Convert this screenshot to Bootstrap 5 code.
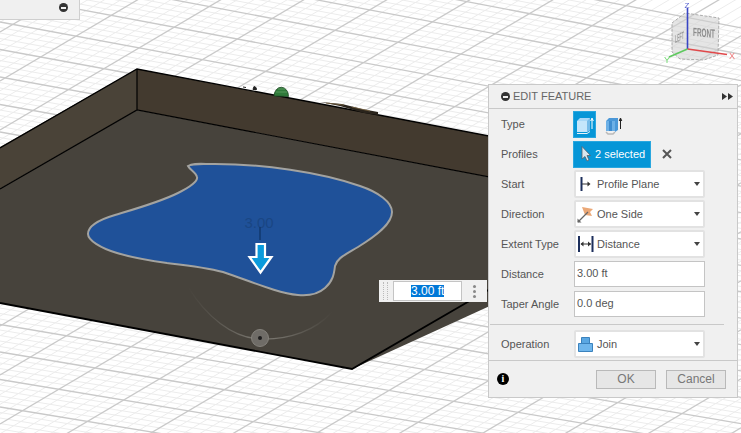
<!DOCTYPE html>
<html lang="en">
<head>
  <meta charset="UTF-8">
  <title>Edit Feature</title>
  <link href="https://cdn.jsdelivr.net/npm/bootstrap@5.3.0/dist/css/bootstrap.min.css" rel="stylesheet">
  <style>
    html, body { margin: 0; height: 100%; overflow: hidden; background: #fff; }
    body { font-family: "Liberation Sans", Arial, sans-serif; font-size: 11px; color: #555; }
    .stage { width: 741px; height: 433px; }
    .scene { left: 0; top: 0; }
    .cube-soft { filter: blur(.35px); }
    .browser-stub { left: 0; top: 0; width: 80px; height: 20px; background: #f0f0f0; border: 1px solid #cfcfcf; border-width: 0 1px 1px 0; padding: 0 11px 4px 0; }
    .minus-dot { width: 9px; height: 9px; border-radius: 50%; background: #333; }
    .minus-dot::after { content: ""; width: 5px; height: 2px; background: #f0f0f0; }
    .float-input { left: 379px; top: 280px; width: 108px; height: 22px; background: #f0f0f0; }
    .grip { width: 5px; height: 18px; margin: 0 5px 0 4px; border-left: 1px dotted #bbb; border-right: 1px dotted #bbb; }
    .float-field { width: 69px; height: 20px; background: #fff; border: 1px solid #c4c4c4; padding-left: 17px; font-size: 12px; line-height: 18px; color: #fff; }
    .float-field span { background: #0078d7; display: inline-block; height: 12px; line-height: 12px; padding: 0; }
    .kebab { width: 3px; height: 3px; margin-left: 11px; border-radius: 50%; background: #888; box-shadow: 0 -5px 0 #888, 0 5px 0 #888; }
    .feature-panel { left: 488px; top: 84px; width: 250px; height: 314px; background: #f0f0f0; border: 1px solid #c9c9c9; }
    .panel-head { height: 24px; padding: 0 4px 0 12px; border-bottom: 1px solid #c9c9c9; color: #666; }
    .panel-head .minus-dot { margin-right: 3px; }
    .panel-body-area { height: 251px; }
    .form-line { height: 30px; padding-left: 12px; }
    .form-line label { width: 73px; margin: 0; color: #555; flex: none; }
    .tool-btn { height: 27px; margin-left: -1px; background: #0696d7; border: 1px solid #2aa7df; border-radius: 0; color: #fff; font-size: 11px; padding: 0; }
    .type-btn { width: 23px; }
    .ghost-btn { width: 22px; margin-left: 7px; }
    .pick-btn { width: 78px; padding-left: 7px; gap: 4px; }
    .clear-x { margin-left: 11px; }
    .combo { width: 131px; height: 28px; background: #fff; border: 2px solid #e2e2e2; border-radius: 2px; padding: 0 3px 0 1px; color: #555; flex: none; }
    .combo-icon { width: 20px; height: 20px; flex: none; }
    .combo-caret { margin-left: auto; width: 0; height: 0; border: 3.5px solid transparent; border-top: 4px solid #444; border-bottom: 0; }
    .feature-panel .field-input { width: 131px; height: 26px; border: 1px solid #c4c4c4; border-radius: 0; padding: 0 2px 2px 2px; font-size: 11px; color: #555; background: #fff; box-shadow: none; flex: none; }
    .panel-rule { margin: 5px 13px 4px 1px; height: 1px; background: #c9c9c9; }
    .panel-foot { height: 37px; border-top: 1px solid #c9c9c9; padding: 0 11px 0 8px; }
    .info-dot { width: 12px; height: 12px; border-radius: 50%; background: #000; color: #fff; font: bold 10px/12px "Liberation Serif", serif; text-align: center; }
    .foot-btn { width: 60px; height: 19px; padding: 0; border: 1px solid #b9b9b9; border-radius: 0; background: #e6e6e6; color: #777; font-size: 12px; line-height: 17px; }
    .foot-btn + .foot-btn { margin-left: 10px; }
  </style>
</head>
<body>
<div class="stage position-relative overflow-hidden">

  <svg class="scene position-absolute" width="741" height="433" viewBox="0 0 741 433">
    <defs>
      <linearGradient id="arcFade" x1="188" x2="332" y1="0" y2="0" gradientUnits="userSpaceOnUse">
        <stop offset="0" stop-color="#6e6b64" stop-opacity="0"/>
        <stop offset=".45" stop-color="#77746d"/>
        <stop offset=".6" stop-color="#77746d"/>
        <stop offset="1" stop-color="#6e6b64" stop-opacity="0"/>
      </linearGradient>
    </defs>
    <g id="grid"></g>

    <!-- box: floor and two walls -->
    <polygon points="-30,206 137,110 689,215 352,369 0,303 -30,297" fill="#47433c"/>
    <polygon points="137,69 137,110 -30,206 -30,164" fill="#4a4338"/>
    <polygon points="137,69 689,174 689,215 137,110" fill="#433a2f"/>
    <g stroke="#000" fill="none">
      <path d="M0 148L137 69L689 174" stroke-width="1.4"/>
      <path d="M137 69V110M0 189L137 110L689 215" stroke-width="1.2"/>
      <path d="M0 303L352 369L689 174" stroke-width="1.8"/>
    </g>

    <!-- stuff poking over the back wall -->
    <path d="M274 96a7.250 9 0 0 1 14.500 .5z" fill="#2f7a3a" stroke="#1d4522" stroke-width=".8"/>
    <path d="M276 92h11M278 89h7" stroke="#6aa86e" stroke-width=".7"/>
    <path d="M243 87l3 .5M253 89.500l1-3 2 1 .5 2z" stroke="#222" fill="#222"/>
    <path d="M320 102l22 2 20 5 16 3v3l-14-2-24-7z" fill="#2a241c"/>
    <path d="M326 103l18 2M352 107l18 4" stroke="#7a6443" stroke-width=".8"/>

    <!-- selected profile -->
    <path d="M188 166C193 163 200 164 215 164C262 164 320 172 360 186C378 192 392 202 392 212C392 224 376 236 358 247C345 255 337 258 335 266C334 274 333 281 325 288C317 295 308 296 298 295C278 293 255 283 223 272C205 267 185 265 167 263C145 260 130 257 117 253C100 248 88 240 88 234C88 226 98 220 115 215C135 209 160 202 178 193C192 186 198 181 197 177C196 172 190 170 188 166Z" fill="#1f5199" stroke="#a3a3a0" stroke-width="2"/>

    <!-- drag arrow and dimension -->
    <text x="259" y="228" text-anchor="middle" font-family="Liberation Sans, sans-serif" font-size="15" fill="#1a4684">3.00</text>
    <path d="M260 227V240" stroke="#12386e" stroke-width="1.500"/>
    <path d="M256.500 244H265V257H271.500L260.500 272.500L249.500 257H256.500Z" fill="#0a9bdc" stroke="#fff" stroke-width="2.200"/>

    <!-- angle handle -->
    <path d="M188 287C206 316 232 338 260 339C290 340 316 330 332 312" fill="none" stroke="url(#arcFade)" stroke-width="1.200"/>
    <circle cx="260" cy="338" r="8.500" fill="#6f6c67" stroke="#85827c"/>
    <circle cx="260" cy="338" r="2" fill="#1e1e1e"/>

    <!-- view cube -->
    <g class="cube-soft">
      <polygon points="672,23 685,13 719,18 718,55 704,60 680,59 672,52" fill="#cfcfcf" fill-opacity=".55"/>
      <path d="M672 23L685 13L719 18L718 55L704 60L680 59L672 52Z" fill="none" stroke="#9a9a9a" stroke-width=".8" stroke-dasharray="3 1.500"/>
      <text transform="translate(693 36) skewY(5)" font-family="Liberation Sans, sans-serif" font-size="12" font-weight="700" fill="#8b8b8b" textLength="22" lengthAdjust="spacingAndGlyphs">FRONT</text>
      <text transform="translate(675 43) skewY(-25)" font-family="Liberation Sans, sans-serif" font-size="11" font-weight="700" fill="#999" textLength="9" lengthAdjust="spacingAndGlyphs">LEFT</text>
      <path d="M687.500 49V8" stroke="#3845c4" stroke-width="1.600"/>
      <path d="M687.500 49L727 54.500" stroke="#e0484a" stroke-width="1.600"/>
      <path d="M687.500 49L669 57" stroke="#5fc95f" stroke-width="1.600"/>
      <text x="687" y="8" text-anchor="middle" font-family="Liberation Sans, sans-serif" font-size="8" fill="#5a64d0">Z</text>
      <text x="729" y="59" font-family="Liberation Sans, sans-serif" font-size="9" fill="#ee7a7c">X</text>
      <text x="664" y="63" font-family="Liberation Sans, sans-serif" font-size="9" fill="#70d870">Y</text>
    </g>
  </svg>

  <!-- collapsed browser panel, top left -->
  <div class="browser-stub position-absolute d-flex align-items-center justify-content-end">
    <span class="minus-dot d-flex align-items-center justify-content-center"></span>
  </div>

  <!-- value box next to the arrow -->
  <div class="float-input position-absolute d-flex align-items-center">
    <span class="grip"></span>
    <div class="float-field"><span>3.00 ft</span></div>
    <span class="kebab"></span>
  </div>

  <!-- command dialog -->
  <div class="feature-panel position-absolute d-flex flex-column">
    <div class="panel-head d-flex align-items-center">
      <span class="minus-dot d-flex align-items-center justify-content-center"></span>
      <span>EDIT FEATURE</span>
      <svg class="ms-auto" width="11" height="7" viewBox="0 0 11 7"><path d="M0 0L5 3.500L0 7ZM6 0L11 3.500L6 7Z" fill="#333"/></svg>
    </div>

    <div class="panel-body-area">
      <div class="form-line d-flex align-items-center">
        <label>Type</label>
        <button type="button" class="btn tool-btn type-btn d-flex align-items-center justify-content-center">
          <svg width="20" height="22" viewBox="0 0 20 22">
            <path d="M2 8L5 5H15V17L12 19H2Z" fill="#a9d8f7"/>
            <path d="M2 8H12V19H2Z" fill="#c5e6fb"/>
            <path d="M12 8L15 5V17L12 19Z" fill="#77bce9"/>
            <path d="M2 20H12L15 18V19L12 21H2Z" fill="#e8f3f8"/>
            <path d="M17 16V6M15.700 8L17 5L18.300 8" stroke="#fff" fill="none" stroke-width="1"/>
          </svg>
        </button>
        <button type="button" class="btn ghost-btn p-0 border-0 d-flex align-items-center justify-content-center">
          <svg width="20" height="22" viewBox="0 0 20 22">
            <path d="M2 8L5 5H14V17L11 19V8H2Z" fill="#4b98d8"/>
            <path d="M2 8H5V18H2Z" fill="#6db0e6"/>
            <path d="M5 8H8V18H5Z" fill="#3f8dd0"/>
            <path d="M8 8H11V18H8Z" fill="#6db0e6"/>
            <path d="M2 19L4 21H9L11 19" fill="none" stroke="#b9b9b9" stroke-width="1.500"/>
            <path d="M16.500 16V6M15.200 8L16.500 5L17.800 8" stroke="#222" fill="none" stroke-width="1"/>
          </svg>
        </button>
      </div>

      <div class="form-line d-flex align-items-center">
        <label>Profiles</label>
        <button type="button" class="btn tool-btn pick-btn d-flex align-items-center">
          <svg width="10" height="16" viewBox="0 0 10 16"><path d="M1 0.500V13L4 10.500L6 15L8 14L6 9.500H9.500Z" fill="#d9e6ee" stroke="#55606a" stroke-width=".8"/></svg>
          <span>2 selected</span>
        </button>
        <svg class="clear-x" width="10" height="10" viewBox="0 0 10 10"><path d="M1 1L9 9M9 1L1 9" stroke="#555" stroke-width="2"/></svg>
      </div>

      <div class="form-line d-flex align-items-center">
        <label>Start</label>
        <div class="combo d-flex align-items-center">
          <svg class="combo-icon" viewBox="0 0 20 20"><path d="M4.500 3V17" stroke="#1d2f5c" stroke-width="2"/><path d="M5 10H12" stroke="#333" stroke-width="1"/><path d="M10.500 7.500L13.500 10L10.500 12.500Z" fill="#333"/></svg>
          <span>Profile Plane</span><span class="combo-caret"></span>
        </div>
      </div>

      <div class="form-line d-flex align-items-center">
        <label>Direction</label>
        <div class="combo d-flex align-items-center">
          <svg class="combo-icon" viewBox="0 0 20 20"><path d="M5 3L16 5L13 8L15 12L8 11Z" fill="#eba877"/><path d="M1 18L11 8" stroke="#666" stroke-width="1.200"/><path d="M0.500 14.500V18.500H4.500Z" fill="#666"/></svg>
          <span>One Side</span><span class="combo-caret"></span>
        </div>
      </div>

      <div class="form-line d-flex align-items-center">
        <label>Extent Type</label>
        <div class="combo d-flex align-items-center">
          <svg class="combo-icon" viewBox="0 0 20 20"><path d="M2 2V18M15.500 2V18" stroke="#1d2f5c" stroke-width="2"/><path d="M4 10H14" stroke="#333"/><path d="M6.500 7.500L3.500 10L6.500 12.500ZM11 7.500L14 10L11 12.500Z" fill="#333"/></svg>
          <span>Distance</span><span class="combo-caret"></span>
        </div>
      </div>

      <div class="form-line d-flex align-items-center">
        <label>Distance</label>
        <input class="form-control field-input" value="3.00 ft">
      </div>

      <div class="form-line d-flex align-items-center">
        <label>Taper Angle</label>
        <input class="form-control field-input" value="0.0 deg">
      </div>

      <div class="panel-rule"></div>

      <div class="form-line d-flex align-items-center">
        <label>Operation</label>
        <div class="combo d-flex align-items-center">
          <svg class="combo-icon" viewBox="0 0 20 20"><path d="M4.500 3.500H12.500V10H4.500Z" fill="#5aa7e2" stroke="#3b82bd"/><path d="M1.500 9.500H15.500V17.500H1.500Z" fill="#6fb6ec" stroke="#3b82bd"/></svg>
          <span>Join</span><span class="combo-caret"></span>
        </div>
      </div>
    </div>

    <div class="panel-foot d-flex align-items-center">
      <span class="info-dot">i</span>
      <div class="ms-auto d-flex">
        <button type="button" class="btn foot-btn">OK</button>
        <button type="button" class="btn foot-btn">Cancel</button>
      </div>
    </div>
  </div>
</div>

<script>
  // ground grid, major lines every 5 minor cells
  const grid = document.getElementById('grid');
  let lines = '';
  function addLine(x2, y1, y2, major) {
    lines += `<line x1="0" y1="${y1}" x2="${x2}" y2="${y2}" stroke="${major ? '#c9c9c9' : '#ececec'}" stroke-width="${major ? 1.3 : 1}"/>`;
  }
  for (let i = -25; i <= 75; i++) {
    const k = i / 5;
    const a = 22 + 27.5 * k;
    const slope = 0.186 - 0.0015 * k;
    if (i % 5) addLine(741, a, a + slope * 741, false);
  }
  for (let i = -40; i <= 70; i++) {
    const b = 375 + 49 * i / 5;
    if (i % 5) addLine(741, b, b - 0.59 * 741, false);
  }
  for (let i = -25; i <= 75; i += 5) {
    const k = i / 5;
    const a = 22 + 27.5 * k;
    addLine(741, a, a + (0.186 - 0.0015 * k) * 741, true);
  }
  for (let i = -40; i <= 70; i += 5) {
    const b = 375 + 49 * i / 5;
    addLine(741, b, b - 0.59 * 741, true);
  }
  grid.innerHTML = lines;
</script>
<script src="https://cdn.jsdelivr.net/npm/bootstrap@5.3.0/dist/js/bootstrap.bundle.min.js"></script>
</body>
</html>
